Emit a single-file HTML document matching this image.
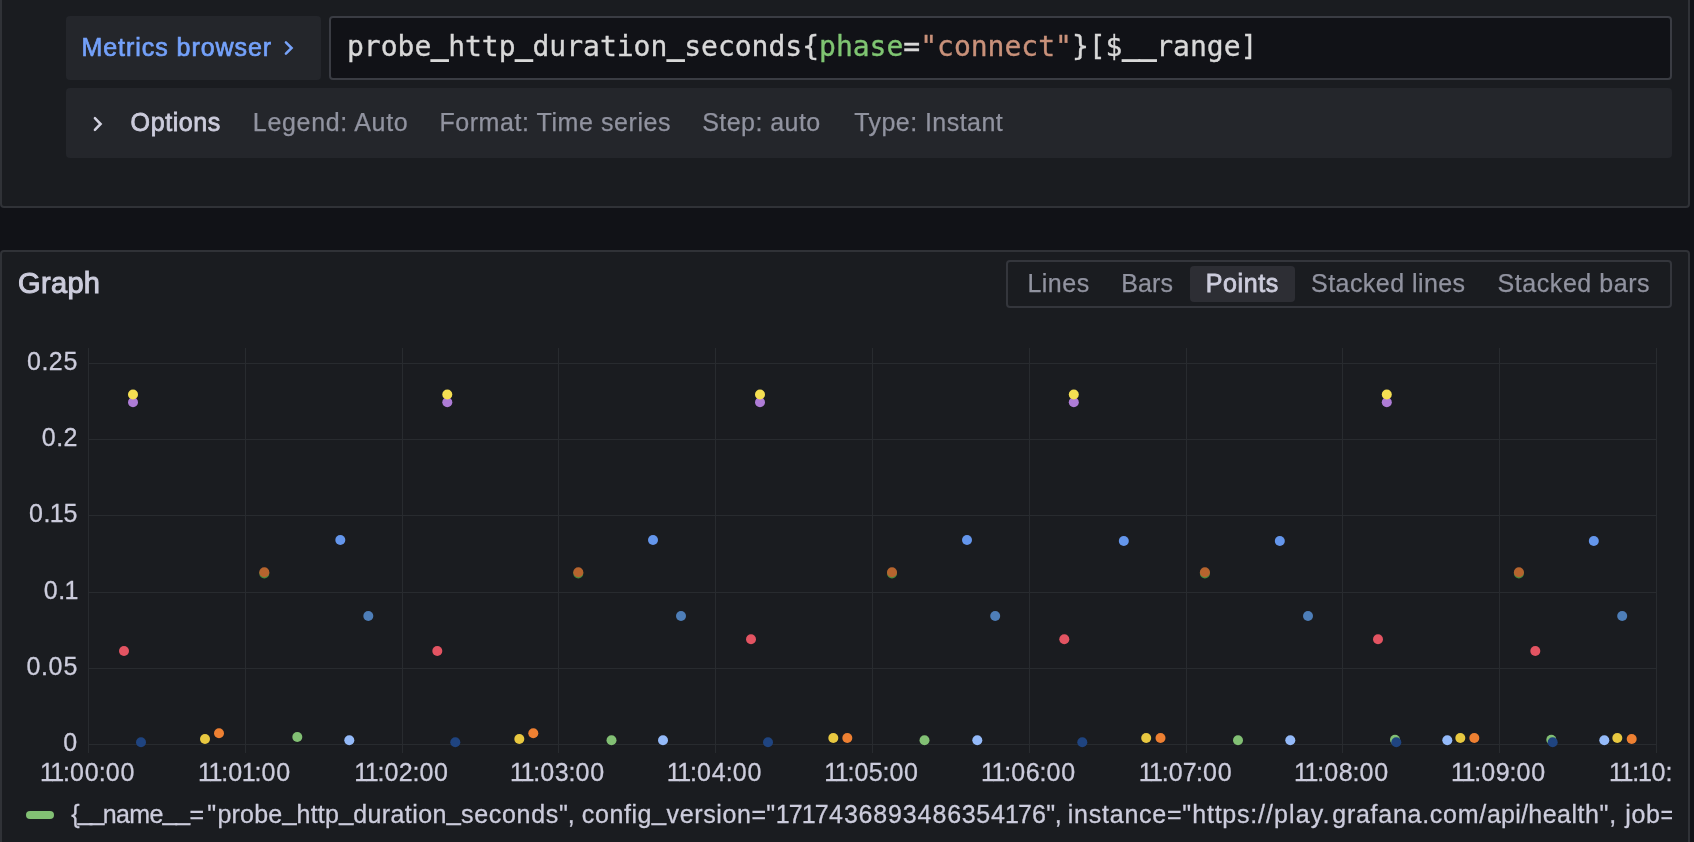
<!DOCTYPE html>
<html lang="en">
<head>
<meta charset="utf-8">
<title>Explore - Grafana</title>
<style>
*{box-sizing:border-box;margin:0;padding:0}
html,body{width:1694px;height:842px;overflow:hidden;background:#111217}
body{position:relative;font-family:"Liberation Sans",sans-serif;color:#ccccdc;-webkit-font-smoothing:antialiased}
#root{position:absolute;left:0;top:0;width:1694px;height:842px;will-change:transform}
.abs{position:absolute}
.t{position:absolute;white-space:nowrap;line-height:1}
/* top panel */
#qpanel{left:0;top:-10px;width:1690px;height:218px;background:#1a1c20;border:2px solid #303237;border-radius:4px}
#mbtn{left:66px;top:16px;width:255px;height:64px;background:#24262b;border-radius:4px}
#qfield{left:329px;top:16px;width:1343px;height:64px;background:#111217;border:2px solid #3a3c43;border-radius:4px}
#qfield .t{left:16px;top:12px;font-family:"DejaVu Sans Mono","Liberation Mono",monospace;font-size:28px;line-height:34px;color:#d8d8d8;-webkit-text-stroke:0.35px #d8d8d8}
.lbl{color:#7fc572;-webkit-text-stroke-color:#7fc572}.str{color:#c9917a;-webkit-text-stroke-color:#c9917a}
#opts{left:66px;top:88px;width:1606px;height:70px;background:#24262b;border-radius:4px}
/* graph panel */
#gpanel{left:0;top:250px;width:1690px;height:620px;background:#1a1c20;border:2px solid #303237;border-radius:4px}
#radio{left:1006px;top:260px;width:666px;height:48px;border:2px solid #34363c;border-radius:4px;background:#1a1c20}
#ractive{left:1190px;top:266px;width:105px;height:36px;background:#2d2e34;border-radius:4px}
.ax{font-size:25px;stroke:#ccccdc;stroke-width:0.3px;fill:#ccccdc;font-family:"Liberation Sans",sans-serif}
.lg{font-size:25px;stroke:#ccccdc;stroke-width:0.3px;fill:#ccccdc;font-family:"Liberation Sans",sans-serif;white-space:pre}
.us{stroke-width:0.55px}
.u{position:relative;top:-2.4px;-webkit-text-stroke-width:1.7px}
</style>
</head>
<body>
<div id="root">
<div id="qpanel" class="abs"></div>
<div id="mbtn" class="abs">
<svg class="abs" style="left:0;top:0" width="255" height="64" viewBox="0 0 255 64"><path d="M219.9 26.3 L225.6 32 L219.9 37.7" fill="none" stroke="#78a3f9" stroke-width="2.5" stroke-linecap="round" stroke-linejoin="miter"/></svg>
</div>
<div id="qfield" class="abs"><span class="t">probe<span class="u">_</span>http<span class="u">_</span>duration<span class="u">_</span>seconds{<span class="lbl">phase</span>=<span class="str">"connect"</span>}[$<span class="u">__</span>range]</span></div>
<div id="opts" class="abs">
<svg class="abs" style="left:0;top:0" width="100" height="70" viewBox="0 0 100 70"><path d="M28.9 30.2 L34.6 36 L28.9 41.8" fill="none" stroke="#d2d2e0" stroke-width="2.5" stroke-linecap="round" stroke-linejoin="miter"/></svg>
</div>

<div id="gpanel" class="abs"></div>
<div id="radio" class="abs"></div>
<div id="ractive" class="abs"></div>

<span id="mb" class="t" style="left:81.50px;top:34.84px;font-size:25px;letter-spacing:0.943px;color:#74a1fa;-webkit-text-stroke:0.7px #74a1fa">Metrics browser</span>
<span id="op" class="t" style="left:130.60px;top:109.84px;font-size:25px;letter-spacing:0.601px;color:#ccccdc;-webkit-text-stroke:0.8px #ccccdc">Options</span>
<span id="o1" class="t" style="left:252.80px;top:109.84px;font-size:25px;letter-spacing:0.682px;color:#9193a0;-webkit-text-stroke:0.25px #9193a0">Legend: Auto</span>
<span id="o2" class="t" style="left:439.40px;top:109.84px;font-size:25px;letter-spacing:0.568px;color:#9193a0;-webkit-text-stroke:0.25px #9193a0">Format: Time series</span>
<span id="o3" class="t" style="left:702.20px;top:109.84px;font-size:25px;letter-spacing:0.454px;color:#9193a0;-webkit-text-stroke:0.25px #9193a0">Step: auto</span>
<span id="o4" class="t" style="left:854.20px;top:109.84px;font-size:25px;letter-spacing:0.449px;color:#9193a0;-webkit-text-stroke:0.25px #9193a0">Type: Instant</span>
<span id="gt" class="t" style="left:18.00px;top:269.45px;font-size:29px;letter-spacing:0.350px;color:#ccccdc;-webkit-text-stroke:1.0px #ccccdc">Graph</span>
<span id="r1" class="t" style="left:1027.40px;top:271.24px;font-size:25px;letter-spacing:0.500px;color:#9193a0;-webkit-text-stroke:0.25px #9193a0">Lines</span>
<span id="r2" class="t" style="left:1121.20px;top:271.24px;font-size:25px;letter-spacing:0.100px;color:#9193a0;-webkit-text-stroke:0.25px #9193a0">Bars</span>
<span id="r3" class="t" style="left:1205.80px;top:271.24px;font-size:25px;letter-spacing:0.580px;color:#ccccdc;-webkit-text-stroke:0.8px #ccccdc">Points</span>
<span id="r4" class="t" style="left:1311.00px;top:271.24px;font-size:25px;letter-spacing:0.451px;color:#9193a0;-webkit-text-stroke:0.25px #9193a0">Stacked lines</span>
<span id="r5" class="t" style="left:1497.60px;top:271.24px;font-size:25px;letter-spacing:0.553px;color:#9193a0;-webkit-text-stroke:0.25px #9193a0">Stacked bars</span>
<svg id="chart" class="abs" style="left:0;top:340px" width="1694" height="502" viewBox="0 340 1694 502">
<defs><clipPath id="cl"><rect x="0" y="340" width="1672" height="502"/></clipPath></defs>
<rect x="88" y="348" width="1" height="405" fill="#282b2f"/>
<rect x="245" y="348" width="1" height="405" fill="#282b2f"/>
<rect x="402" y="348" width="1" height="405" fill="#282b2f"/>
<rect x="558" y="348" width="1" height="405" fill="#282b2f"/>
<rect x="715" y="348" width="1" height="405" fill="#282b2f"/>
<rect x="872" y="348" width="1" height="405" fill="#282b2f"/>
<rect x="1029" y="348" width="1" height="405" fill="#282b2f"/>
<rect x="1186" y="348" width="1" height="405" fill="#282b2f"/>
<rect x="1342" y="348" width="1" height="405" fill="#282b2f"/>
<rect x="1499" y="348" width="1" height="405" fill="#282b2f"/>
<rect x="1656" y="348" width="1" height="405" fill="#282b2f"/>
<rect x="88" y="363" width="1569" height="1" fill="#282b2f"/>
<rect x="88" y="439" width="1569" height="1" fill="#282b2f"/>
<rect x="88" y="515" width="1569" height="1" fill="#282b2f"/>
<rect x="88" y="592" width="1569" height="1" fill="#282b2f"/>
<rect x="88" y="668" width="1569" height="1" fill="#282b2f"/>
<rect x="88" y="744" width="1569" height="1" fill="#282b2f"/>
<text x="26.28" y="369.6" dx="0.73 0.6 0.29 0.83" class="ax">0.25</text>
<text x="41.02" y="445.6" dx="0.73 0.6 0.29" class="ax">0.2</text>
<text x="28.16" y="521.6" dx="0.73 0.6 -0.65 -0.11" class="ax">0.15</text>
<text x="42.90" y="598.6" dx="0.73 0.6 -0.65" class="ax">0.1</text>
<text x="25.65" y="674.6" dx="0.73 0.6 0.6 1.14" class="ax">0.05</text>
<text x="62.44" y="750.6" dx="0.73" class="ax">0</text>
<g clip-path="url(#cl)">
<text x="40.70" y="780.6" dx="-0.8 -1.6 -1.17 0.03 0.8 0.03 0.03 0.8" class="ax">11:00:00</text>
<text x="198.90" y="780.6" dx="-0.8 -1.6 -1.17 0.03 -0.4 -1.17 0.03 0.8" class="ax">11:01:00</text>
<text x="355.00" y="780.6" dx="-0.8 -1.6 -1.17 0.03 0.5 -0.27 0.03 0.8" class="ax">11:02:00</text>
<text x="510.85" y="780.6" dx="-0.8 -1.6 -1.17 0.03 0.65 -0.12 0.03 0.8" class="ax">11:03:00</text>
<text x="667.65" y="780.6" dx="-0.8 -1.6 -1.17 0.03 0.85 0.08 0.03 0.8" class="ax">11:04:00</text>
<text x="825.00" y="780.6" dx="-0.8 -1.6 -1.17 0.03 0.5 -0.27 0.03 0.8" class="ax">11:05:00</text>
<text x="981.85" y="780.6" dx="-0.8 -1.6 -1.17 0.03 0.65 -0.12 0.03 0.8" class="ax">11:06:00</text>
<text x="1139.45" y="780.6" dx="-0.8 -1.6 -1.17 0.03 0.05 -0.72 0.03 0.8" class="ax">11:07:00</text>
<text x="1294.85" y="780.6" dx="-0.8 -1.6 -1.17 0.03 0.65 -0.12 0.03 0.8" class="ax">11:08:00</text>
<text x="1451.85" y="780.6" dx="-0.8 -1.6 -1.17 0.03 0.65 -0.12 0.03 0.8" class="ax">11:09:00</text>
<text x="1609.90" y="780.6" dx="-0.8 -1.6 -1.17 -1.17 -0.4 0.03 0.03 0.8" class="ax">11:10:00</text>
</g>
<circle cx="297.3" cy="737" r="5" fill="#82c074"/>
<circle cx="611.5" cy="740.2" r="5" fill="#82c074"/>
<circle cx="924.5" cy="740.2" r="5" fill="#82c074"/>
<circle cx="1238" cy="740.2" r="5" fill="#82c074"/>
<circle cx="1395" cy="739.7" r="5" fill="#82c074"/>
<circle cx="1551.3" cy="739.7" r="5" fill="#82c074"/>
<circle cx="205" cy="739" r="5" fill="#e8c840"/>
<circle cx="519.3" cy="739" r="5" fill="#e8c840"/>
<circle cx="833.3" cy="738" r="5" fill="#e8c840"/>
<circle cx="1146.2" cy="738" r="5" fill="#e8c840"/>
<circle cx="1460.3" cy="738" r="5" fill="#e8c840"/>
<circle cx="1617.3" cy="738" r="5" fill="#e8c840"/>
<circle cx="349.3" cy="740.3" r="5" fill="#94baf9"/>
<circle cx="663" cy="740.3" r="5" fill="#94baf9"/>
<circle cx="977.3" cy="740.3" r="5" fill="#94baf9"/>
<circle cx="1290.3" cy="740.3" r="5" fill="#94baf9"/>
<circle cx="1447.3" cy="740.3" r="5" fill="#94baf9"/>
<circle cx="1604.3" cy="740.3" r="5" fill="#94baf9"/>
<circle cx="219" cy="733.3" r="5" fill="#ee8032"/>
<circle cx="533.3" cy="733.3" r="5" fill="#ee8032"/>
<circle cx="847.3" cy="738" r="5" fill="#ee8032"/>
<circle cx="1160.5" cy="738" r="5" fill="#ee8032"/>
<circle cx="1474.3" cy="738" r="5" fill="#ee8032"/>
<circle cx="1631.7" cy="739" r="5" fill="#ee8032"/>
<circle cx="124" cy="651" r="5" fill="#e35462"/>
<circle cx="437.3" cy="651" r="5" fill="#e35462"/>
<circle cx="751" cy="639.3" r="5" fill="#e35462"/>
<circle cx="1064.3" cy="639.3" r="5" fill="#e35462"/>
<circle cx="1378" cy="639.3" r="5" fill="#e35462"/>
<circle cx="1535.3" cy="651" r="5" fill="#e35462"/>
<circle cx="340.3" cy="540" r="5" fill="#6496ec"/>
<circle cx="653" cy="540" r="5" fill="#6496ec"/>
<circle cx="967" cy="540" r="5" fill="#6496ec"/>
<circle cx="1123.8" cy="541" r="5" fill="#6496ec"/>
<circle cx="1279.8" cy="541" r="5" fill="#6496ec"/>
<circle cx="1593.8" cy="541" r="5" fill="#6496ec"/>
<circle cx="133" cy="402.3" r="5" fill="#ae7cd6"/>
<circle cx="447.3" cy="402.3" r="5" fill="#ae7cd6"/>
<circle cx="760" cy="402.3" r="5" fill="#ae7cd6"/>
<circle cx="1073.8" cy="402.3" r="5" fill="#ae7cd6"/>
<circle cx="1386.8" cy="402.3" r="5" fill="#ae7cd6"/>
<circle cx="264.3" cy="573.5" r="5" fill="#4a8a3c"/>
<circle cx="578.3" cy="573.5" r="5" fill="#4a8a3c"/>
<circle cx="892" cy="573.5" r="5" fill="#4a8a3c"/>
<circle cx="1204.9" cy="573.5" r="5" fill="#4a8a3c"/>
<circle cx="1518.9" cy="573.5" r="5" fill="#4a8a3c"/>
<circle cx="133" cy="394.5" r="5" fill="#f5df52"/>
<circle cx="447.3" cy="394.5" r="5" fill="#f5df52"/>
<circle cx="760" cy="394.5" r="5" fill="#f5df52"/>
<circle cx="1073.8" cy="394.5" r="5" fill="#f5df52"/>
<circle cx="1386.8" cy="394.5" r="5" fill="#f5df52"/>
<circle cx="368.3" cy="616" r="5" fill="#4e7eb8"/>
<circle cx="681" cy="616" r="5" fill="#4e7eb8"/>
<circle cx="995.2" cy="616" r="5" fill="#4e7eb8"/>
<circle cx="1308" cy="616" r="5" fill="#4e7eb8"/>
<circle cx="1622.2" cy="616" r="5" fill="#4e7eb8"/>
<circle cx="264.3" cy="572.3" r="5" fill="#b6642e"/>
<circle cx="578.3" cy="572.3" r="5" fill="#b6642e"/>
<circle cx="892" cy="572.3" r="5" fill="#b6642e"/>
<circle cx="1204.9" cy="572.3" r="5" fill="#b6642e"/>
<circle cx="1518.9" cy="572.3" r="5" fill="#b6642e"/>
<circle cx="141" cy="742.3" r="5" fill="#1f4480"/>
<circle cx="455.3" cy="742.3" r="5" fill="#1f4480"/>
<circle cx="768" cy="742.3" r="5" fill="#1f4480"/>
<circle cx="1082.3" cy="742.3" r="5" fill="#1f4480"/>
<circle cx="1396.3" cy="742.3" r="5" fill="#1f4480"/>
<circle cx="1552.7" cy="742.3" r="5" fill="#1f4480"/>
<rect x="26" y="811" width="28" height="8" rx="4" fill="#82c074"/>
<g clip-path="url(#cl)">
<text class="lg"><tspan x="71.18" y="823" style="letter-spacing:-1.57px">{</tspan><tspan class="us" x="77.97" y="819.9" style="letter-spacing:-1.57px">__</tspan><tspan x="102.64" y="823" style="letter-spacing:-0.60px">name</tspan><tspan class="us" x="162.77" y="819.9" style="letter-spacing:-0.60px">__</tspan><tspan x="189.38" y="823" style="letter-spacing:3.26px">=</tspan><tspan x="207.24" y="823" style="letter-spacing:1.28px">"</tspan><tspan x="217.39" y="823" style="letter-spacing:0.22px">probe</tspan><tspan class="us" x="282.44" y="819.9" style="letter-spacing:0.22px">_</tspan><tspan x="296.57" y="823" style="letter-spacing:0.22px">http</tspan><tspan class="us" x="339.13" y="819.9" style="letter-spacing:0.22px">_</tspan><tspan x="353.25" y="823" style="letter-spacing:0.39px">duration</tspan><tspan class="us" x="446.71" y="819.9" style="letter-spacing:0.39px">_</tspan><tspan x="461.00" y="823" style="letter-spacing:0.69px">seconds</tspan><tspan x="558.94" y="823" style="letter-spacing:0.04px">", </tspan><tspan x="581.84" y="823" style="letter-spacing:0.59px">config</tspan><tspan class="us" x="652.12" y="819.9" style="letter-spacing:0.59px">_</tspan><tspan x="666.61" y="823" style="letter-spacing:0.61px">version</tspan><tspan x="751.48" y="823" style="letter-spacing:0.16px">=</tspan><tspan x="766.24" y="823" style="letter-spacing:1.28px">"</tspan><tspan x="776.40" y="823" dx="-0.68 -0.90 -0.90 -0.90 0.37 0.99 0.78 0.78 0.78 0.78 0.99 0.99 0.78 0.78 0.63 0.83 -0.09 -0.90 0.17">1717436893486354176</tspan><tspan x="1046.24" y="823" style="letter-spacing:-0.46px">", </tspan><tspan x="1067.63" y="823" style="letter-spacing:0.79px">instance</tspan><tspan x="1167.08" y="823" style="letter-spacing:0.56px">=</tspan><tspan x="1182.24" y="823" style="letter-spacing:1.15px">"</tspan><tspan x="1192.27" y="823" style="letter-spacing:0.76px">https:</tspan><tspan x="1258.00" y="823" style="letter-spacing:1.08px">//play.</tspan><tspan x="1332.25" y="823" style="letter-spacing:0.73px">grafana.com/</tspan><tspan x="1486.94" y="823" style="letter-spacing:0.26px">api/</tspan><tspan x="1528.27" y="823" style="letter-spacing:0.51px">health</tspan><tspan x="1599.44" y="823" style="letter-spacing:1.04px">", </tspan><tspan x="1625.31" y="823" style="letter-spacing:0.60px">job=</tspan></text>
</g>
</svg>
</div>
</body>
</html>
